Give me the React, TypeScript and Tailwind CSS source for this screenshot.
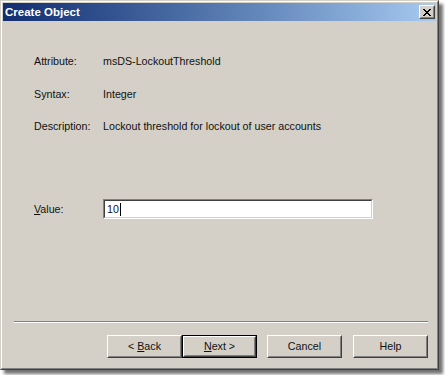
import React from "react";

function Btn({ children, def }: { children: React.ReactNode; def?: boolean }) {
  const inner = (
    <div className="w-full h-full border border-t-white border-l-white border-r-[#404040] border-b-[#404040]">
      <div className="w-full h-full border border-t-[#d4d0c8] border-l-[#d4d0c8] border-r-[#808080] border-b-[#808080] flex items-center justify-center">
        {children}
      </div>
    </div>
  );
  if (def) {
    return <div className="w-[75px] h-[23px] border border-black">{inner}</div>;
  }
  return <div className="w-[75px] h-[23px]">{inner}</div>;
}

export default function App() {
  return (
    <div className="w-[445px] h-[375px] bg-white font-['Liberation_Sans',Arial,sans-serif] text-[10.7px] text-[#111]">
      <div className="w-[439px] h-[370px] shadow-[4px_4px_3px_rgba(0,0,0,0.55)] border border-t-[#d4d0c8] border-l-[#d4d0c8] border-r-[#404040] border-b-[#404040]">
        <div className="w-full h-full border border-t-white border-l-white border-r-[#808080] border-b-[#808080] bg-[#d4d0c8] p-px flex flex-col">
          {/* Title bar */}
          <div className="h-[18px] bg-gradient-to-r from-[#122d70] to-[#a6caf0] flex items-center justify-between pl-[2px] pr-[1px]">
            <span className="text-white font-bold text-[11.5px] leading-[18px]">Create Object</span>
            <div className="w-[16px] h-[14px] border border-t-white border-l-white border-r-[#404040] border-b-[#404040]">
              <div className="w-full h-full bg-[#d4d0c8] border border-t-[#d4d0c8] border-l-[#d4d0c8] border-r-[#808080] border-b-[#808080] flex items-center justify-center">
                <svg width="8" height="7" viewBox="0 0 8 7" shapeRendering="crispEdges">
                  <path d="M0 0h2v1H0zM6 0h2v1H6zM1 1h2v1H1zM5 1h2v1H5zM2 2h4v1H2zM3 3h2v1H3zM2 4h4v1H2zM1 5h2v1H1zM5 5h2v1H5zM0 6h2v1H0zM6 6h2v1H6z" fill="#000" />
                </svg>
              </div>
            </div>
          </div>

          {/* Content */}
          <div className="flex flex-col pl-[31px]">
            <div className="flex h-[13px] leading-[13px] mt-[34px]">
              <span className="w-[69px]">Attribute:</span>
              <span>msDS-LockoutThreshold</span>
            </div>
            <div className="flex h-[13px] leading-[13px] mt-[20px]">
              <span className="w-[69px]">Syntax:</span>
              <span>Integer</span>
            </div>
            <div className="flex h-[13px] leading-[13px] mt-[19px]">
              <span className="w-[69px]">Description:</span>
              <span>Lockout threshold for lockout of user accounts</span>
            </div>
            <div className="flex items-center mt-[66px]">
              <span className="w-[69px]">
                <span className="underline">V</span>alue:
              </span>
              <div className="w-[270px] h-[20px] border border-t-[#808080] border-l-[#808080] border-r-white border-b-white">
                <div className="w-full h-full bg-white border border-t-[#404040] border-l-[#404040] border-r-[#d4d0c8] border-b-[#d4d0c8] flex items-center pl-[2px]">
                  <span>10</span>
                  <span className="w-px h-[13px] bg-black ml-px" />
                </div>
              </div>
            </div>
          </div>

          {/* Separator */}
          <div className="mt-[102px] ml-[11px] mr-[8px]">
            <div className="h-px bg-[#808080]" />
            <div className="h-px bg-white" />
          </div>

          {/* Buttons */}
          <div className="flex justify-end mt-[12px] mr-[8px]">
            <Btn>
              <span>
                &lt; <span className="underline">B</span>ack
              </span>
            </Btn>
            <Btn def>
              <span>
                <span className="underline">N</span>ext &gt;
              </span>
            </Btn>
            <div className="w-[10px]" />
            <Btn>Cancel</Btn>
            <div className="w-[11px]" />
            <Btn>Help</Btn>
          </div>
        </div>
      </div>
    </div>
  );
}
